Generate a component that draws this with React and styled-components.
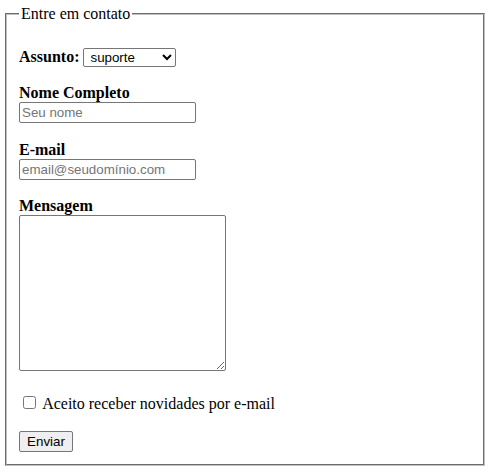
import styled, { createGlobalStyle } from "styled-components";

const GlobalStyle = createGlobalStyle`
  body {
    margin: 0;
    background: #fff;
    color: #000;
    font-family: "Liberation Serif", "Times New Roman", serif;
    font-size: 16px;
  }
`;

const Page = styled.div`
  padding: 5px 8px 8px 5px;
`;

const Fieldset = styled.fieldset`
  margin: 0;
  padding: 7px 12px 12px;
  border: 2px groove #c0c0c0;
`;

const Legend = styled.legend`
  padding: 0 2px;
`;

const Field = styled.p`
  margin: 17.5px 0;
`;

const Label = styled.label`
  font-weight: bold;
`;

const control = `
  font-family: "Liberation Sans", Arial, sans-serif;
  font-size: 13.3333px;
  color: #000;
  border: 1px solid #767676;
  border-radius: 2px;
  box-sizing: border-box;
`;

const Select = styled.select`
  ${control}
  width: 93px;
  height: 19px;
  padding: 0 0 0 2px;
  background: #fff;
`;

const TextInput = styled.input`
  ${control}
  width: 177px;
  height: 21px;
  padding: 1px 2px;
  &::placeholder {
    color: #757575;
  }
`;

const TextArea = styled.textarea`
  ${control}
  width: 207px;
  height: 156px;
  padding: 2px;
`;

const Check = styled.input`
  width: 13px;
  height: 13px;
  margin: 3px 3px 3px 4px;
`;

const Button = styled.button`
  ${control}
  background: #efefef;
  padding: 1px 6px;
  margin-top: 1px;
  height: 21px;
  width: 54px;
`;

export default function App() {
  return (
    <Page>
      <GlobalStyle />
      <form>
        <Fieldset>
          <Legend>Entre em contato</Legend>
          <Field>
            <Label htmlFor="assunto">Assunto:</Label>{" "}
            <Select id="assunto" defaultValue="suporte">
              <option value="suporte">suporte</option>
              <option value="vendas">vendas</option>
            </Select>
          </Field>
          <Field>
            <Label htmlFor="nome">Nome Completo</Label>
            <br />
            <TextInput id="nome" type="text" placeholder="Seu nome" />
          </Field>
          <Field>
            <Label htmlFor="email">E-mail</Label>
            <br />
            <TextInput id="email" type="email" placeholder="email@seudomínio.com" />
          </Field>
          <Field>
            <Label htmlFor="mensagem">Mensagem</Label>
            <br />
            <TextArea id="mensagem" />
          </Field>
          <Field>
            <Check type="checkbox" id="news" />{" "}
            <label htmlFor="news">Aceito receber novidades por e-mail</label>
          </Field>
          <Button type="submit">Enviar</Button>
        </Fieldset>
      </form>
    </Page>
  );
}
